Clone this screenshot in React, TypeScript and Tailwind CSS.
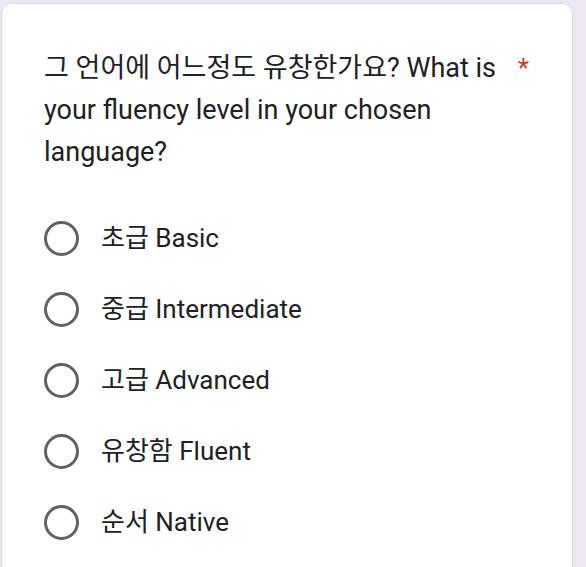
const options = ['초급 Basic', '중급 Intermediate', '고급 Advanced', '유창함 Fluent', '순서 Native'];

export default function App() {
  return (
    <div
      className="h-[567px] w-[586px] overflow-hidden bg-[#ebe8f4] pl-[1px] pt-[3px]"
      style={{ fontFamily: "Roboto, 'Noto Sans CJK KR', sans-serif" }}
    >
      <div className="h-[600px] w-[572px] rounded-[11px] border border-[#dadce0] bg-white pl-[42px] pr-[43px] pt-[43px]">
        <div className="flex items-start">
          <h2 className="flex-1 text-[27px] leading-[42px] font-normal text-[#202124]">
            그 언어에 어느정도 유창한가요? What is your fluency level in your chosen language?
          </h2>
          <span className="pl-[6px] text-[26px] leading-[42px] text-[#d93025]">*</span>
        </div>
        <div className="mt-[48px] flex flex-col gap-[36px]">
          {options.map((label) => (
            <label key={label} className="flex h-[35px] items-center">
              <span className="h-[35px] w-[35px] shrink-0 rounded-full border-[3px] border-[#616161]" />
              <span className="ml-[22px] text-[26px] text-[#202124]">{label}</span>
            </label>
          ))}
        </div>
      </div>
    </div>
  );
}
